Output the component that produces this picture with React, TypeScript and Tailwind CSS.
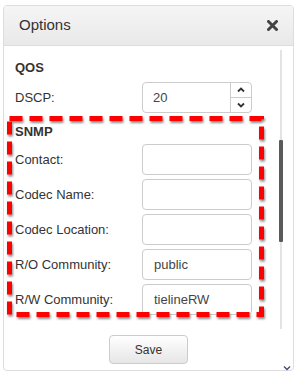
import React from "react";

const Row = ({ label, value }: { label: string; value?: string }) => (
  <div className="flex items-center h-[31px]">
    <div className="w-[127px] text-[13px] text-[#333]">{label}</div>
    <div className="w-[110px] h-[31px] border border-[#ccc] rounded-[4px] bg-white flex items-center pl-[11px] text-[13px] text-[#444]">
      {value}
    </div>
  </div>
);

export default function App() {
  return (
    <div
      className="relative w-[299px] h-[375px] bg-white overflow-hidden"
      style={{ fontFamily: '"Liberation Sans", Arial, sans-serif' }}
    >
      <div className="ml-[3px] mt-[5px] w-[291px] h-[366px] border border-[#ddd] rounded-[4px] flex flex-col overflow-hidden">
        {/* header */}
        <div className="h-[40px] shrink-0 border-b border-[#ddd] bg-gradient-to-b from-[#f5f5f5] to-[#e9e9e9] flex items-center justify-between pl-[15px] pr-[15px]">
          <span className="text-[15px] text-[#333] leading-none pb-[2px]">Options</span>
          <svg width="11" height="11" viewBox="0 0 11 11" className="mb-[1px]">
            <path d="M1.5 1.5 L9.5 9.5 M9.5 1.5 L1.5 9.5" stroke="#444" strokeWidth="3" strokeLinecap="round" />
          </svg>
        </div>
        {/* body */}
        <div className="flex h-[283px] shrink-0">
          <div className="flex-1 pl-[11px] pt-[12px]">
            <div className="h-[20px] leading-[20px] text-[13px] font-bold text-[#333]">QOS</div>
            <div className="flex items-center h-[31px] mt-[4px]">
              <div className="w-[127px] text-[13px] text-[#333]">DSCP:</div>
              <div className="w-[110px] h-[31px] border border-[#ccc] rounded-[4px] bg-white flex">
                <div className="flex-1 flex items-center pl-[10px] text-[13px] text-[#444]">20</div>
                <div className="w-[21px] border-l border-[#ccc] flex flex-col">
                  <div className="flex-1 flex items-center justify-center border-b border-[#ccc]">
                    <svg width="8" height="6" viewBox="0 0 8 6">
                      <path d="M1 4.5 L4 1.5 L7 4.5" stroke="#333" strokeWidth="1.8" fill="none" />
                    </svg>
                  </div>
                  <div className="flex-1 flex items-center justify-center">
                    <svg width="8" height="6" viewBox="0 0 8 6">
                      <path d="M1 1.5 L4 4.5 L7 1.5" stroke="#333" strokeWidth="1.8" fill="none" />
                    </svg>
                  </div>
                </div>
              </div>
            </div>
            <div className="h-[20px] leading-[20px] text-[13px] font-bold text-[#333] mt-[9px]">SNMP</div>
            <div className="mt-[2px] flex flex-col gap-[4px]">
              <Row label="Contact:" />
              <Row label="Codec Name:" />
              <Row label="Codec Location:" />
              <Row label="R/O Community:" value="public" />
              <Row label="R/W Community:" value="tielineRW" />
            </div>
          </div>
          {/* scrollbar */}
          <div className="w-[15px] pl-[1px] pt-[4px]">
            <div className="relative w-[4px] h-full">
              <div className="mx-auto w-[2px] h-full bg-[#e3e3e3]" />
              <div className="absolute left-0 top-[90px] w-[4px] h-[102px] bg-[#5a5a5a] rounded-[1px]" />
            </div>
          </div>
        </div>
        {/* footer */}
        <div className="flex-1 flex justify-center pt-[6px]">
          <button className="w-[79px] h-[29px] border border-[#ccc] rounded-[4px] bg-gradient-to-b from-white to-[#e6e6e6] text-[12px] text-[#333]">
            Save
          </button>
        </div>
      </div>

      {/* red dashed annotation */}
      <svg className="absolute left-0 top-0 pointer-events-none" width="299" height="375">
        <defs>
          <filter id="sh" x="-10%" y="-10%" width="120%" height="120%">
            <feDropShadow dx="1" dy="2" stdDeviation="1.2" floodColor="#000" floodOpacity="0.45" />
          </filter>
        </defs>
        <rect
          x="9.5"
          y="118.5"
          width="252"
          height="196"
          fill="none"
          stroke="#ff0000"
          strokeWidth="5"
          strokeDasharray="13 7"
          filter="url(#sh)"
        />
      </svg>

      {/* bottom-right scroll chevron */}
      <svg className="absolute left-[283px] top-[365px]" width="8" height="6" viewBox="0 0 8 6">
        <path d="M1 1.5 L4 4.5 L7 1.5" stroke="#3d4f73" strokeWidth="1.4" fill="none" />
      </svg>
    </div>
  );
}
